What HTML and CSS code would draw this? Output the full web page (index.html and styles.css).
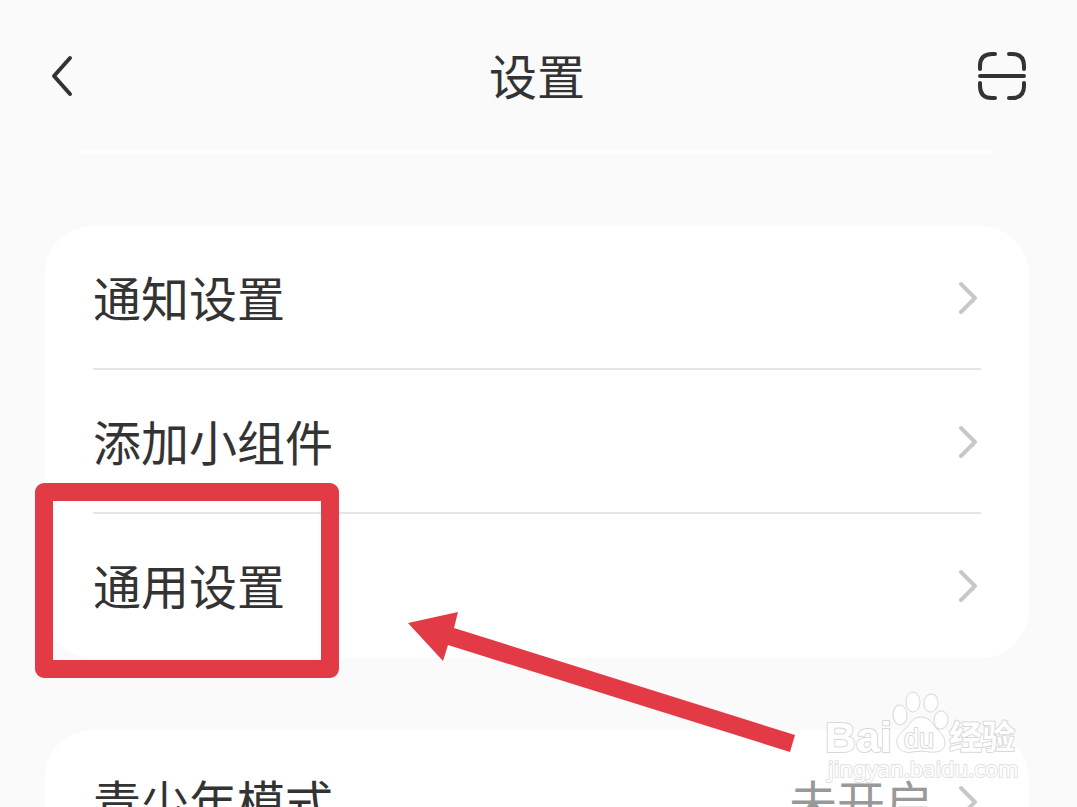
FILE: index.html
```html
<!DOCTYPE html>
<html lang="zh-CN">
<head>
	<meta charset="utf-8">
	<meta name="viewport" content="width=device-width, initial-scale=1">
	<title>设置</title>
	<link rel="stylesheet" href="styles.css">
</head>
<body>
<div class="screen">
	<header class="header">
		<button class="icon-btn" type="button" aria-label="返回">
			<svg width="28" height="48" viewBox="0 0 28 48"><path d="M22 6 L6 24 L22 42"/></svg>
		</button>
		<h1 class="title">设置</h1>
		<button class="icon-btn" type="button" aria-label="扫一扫">
			<svg width="48" height="48" viewBox="0 0 48 48">
				<path d="M2 17 V14 Q2 2 14 2 H17"/>
				<path d="M31 2 H34 Q46 2 46 14 V17"/>
				<path d="M2 31 V34 Q2 46 14 46 H17"/>
				<path d="M31 46 H34 Q46 46 46 34 V31"/>
				<path d="M2 24 H46"/>
			</svg>
		</button>
	</header>
	<div class="strip"></div>
	<main class="groups">
		<ul class="card">
			<li class="item">
				<a class="row" href="#"><span class="label">通知设置</span>
					<svg class="arrow" width="24" height="36" viewBox="0 0 24 36"><path d="M4 4 L18 18 L4 32"/></svg>
				</a>
			</li>
			<li class="item">
				<a class="row" href="#"><span class="label">添加小组件</span>
					<svg class="arrow" width="24" height="36" viewBox="0 0 24 36"><path d="M4 4 L18 18 L4 32"/></svg>
				</a>
			</li>
			<li class="item">
				<a class="row" href="#"><span class="label">通用设置</span>
					<svg class="arrow" width="24" height="36" viewBox="0 0 24 36"><path d="M4 4 L18 18 L4 32"/></svg>
				</a>
				<div class="mark-box"></div>
				<svg class="mark-arrow" width="388" height="142" viewBox="0 0 388 142">
					<path d="M0 11 L50 0 L46 16 L387 123 L382 140 L40 33 L35 49 Z"/>
				</svg>
			</li>
		</ul>
		<ul class="card">
			<li class="item">
				<a class="row" href="#"><span class="label">青少年模式</span>
					<span class="label state">未开启</span>
					<svg class="arrow" width="24" height="36" viewBox="0 0 24 36"><path d="M4 4 L18 18 L4 32"/></svg>
				</a>
			</li>
		</ul>
	</main>
	<!-- 水印 -->
	<svg class="watermark" width="205" height="100" viewBox="0 0 205 100">
		<text class="wm-bai" x="5" y="67">Bai</text>
		<ellipse cx="93" cy="17" rx="7" ry="10"/>
		<ellipse cx="111" cy="18" rx="7" ry="9" transform="rotate(8 111 18)"/>
		<ellipse cx="80" cy="30" rx="7" ry="10" transform="rotate(-5 80 30)"/>
		<ellipse cx="121" cy="35" rx="7" ry="9" transform="rotate(5 121 35)"/>
		<path d="M100 32 C92 32 90 40 84 45 C78 50 76 54 77 59 C79 67 87 68 92 67 C98 66 104 66 110 67 C119 68 125 65 125 58 C125 51 120 48 116 43 C111 36 108 32 100 32 Z"/>
		<text class="wm-du" x="84" y="63">du</text>
		<text class="wm-cn" x="129" y="64">经验</text>
		<text class="wm-url" x="8" y="92">jingyan.baidu.com</text>
	</svg>
</div>
</body>
</html>
```
FILE: styles.css
```css
*{
	box-sizing: border-box;
}
body{
	margin: 0;
	font-family: "Noto Sans CJK SC", sans-serif;
	color: #333;
	background-color: #fafafa;
}
.screen{
	position: relative;
	height: 100vh;
	overflow: hidden;
}
.header{
	display: flex;
	align-items: center;
	justify-content: space-between;
	height: 150px;
	padding: 2px 51px 0 48px;
}
.icon-btn{
	display: flex;
	width: 48px;
	padding: 0;
	border: 0;
	background: none;
	cursor: pointer;
}
.icon-btn svg{
	fill: none;
	stroke: #333;
	stroke-width: 4;
	stroke-linecap: round;
	stroke-linejoin: round;
}
.title{
	margin: 0;
	padding-bottom: 4px;
	font-size: 48px;
	font-weight: 400;
	line-height: 72px;
}
.strip{
	height: 4px;
	margin: 0 84px 0 81px;
	background-color: #fff;
}
.groups{
	display: flex;
	flex-direction: column;
	gap: 72px;
	padding: 72px 48px 72px 45px;
}
.card{
	margin: 0;
	padding: 0 48px;
	list-style: none;
	background-color: #fff;
	border-radius: 48px;
}
.item{
	position: relative;
	height: 144px;
	border-bottom: 2px solid #e5e5e5;
}
.item:last-child{
	border-bottom: 0;
}
.row{
	display: flex;
	align-items: center;
	height: 144px;
	font-size: 48px;
	line-height: 72px;
	color: #333;
	text-decoration: none;
}
.label{
	padding-bottom: 4px;
}
.arrow{
	margin-left: auto;
	fill: none;
	stroke: #c8c8c8;
	stroke-width: 4;
	stroke-linecap: round;
	stroke-linejoin: round;
}
.state{
	margin-left: auto;
	color: #999;
}
.state + .arrow{
	margin-left: 24px;
}
/* 红色标注 */
.mark-box{
	position: absolute;
	left: -58px;
	top: -31px;
	width: 304px;
	height: 195px;
	border: 18px solid #e33b45;
	border-radius: 9px;
	pointer-events: none;
}
.mark-arrow{
	position: absolute;
	left: 315px;
	top: 98px;
	z-index: 1;
	fill: #e33b45;
	pointer-events: none;
}
.watermark{
	position: absolute;
	right: 52px;
	bottom: 22px;
	fill: #fff;
	stroke: #d8d8d8;
	stroke-width: 1;
	pointer-events: none;
}
.watermark text{
	stroke-width: 2;
	stroke-linejoin: round;
	paint-order: stroke;
}
.wm-bai{
	font: 700 43px "Liberation Sans", sans-serif;
}
.wm-du{
	font: 400 27px "Liberation Sans", sans-serif;
}
.wm-cn{
	font: 700 33px "Noto Sans CJK SC", sans-serif;
}
.wm-url{
	font: 400 22px "Noto Sans", sans-serif;
	stroke: #e2e2e2;
}
```
